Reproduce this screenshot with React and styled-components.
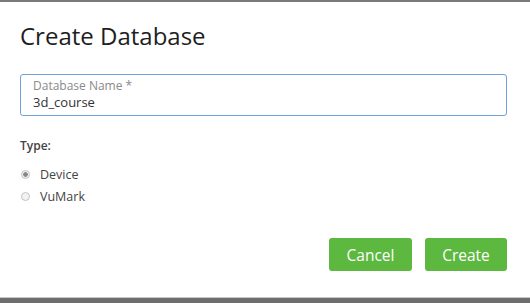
import React from "react";
import styled, { createGlobalStyle } from "styled-components";

const GlobalStyle = createGlobalStyle`
  html, body {
    margin: 0;
    padding: 0;
    background: #ffffff;
  }
  body {
    font-family: "Open Sans", "Noto Sans", sans-serif;
  }
`;

const Frame = styled.div`
  width: 530px;
  height: 303px;
  display: flex;
  flex-direction: column;
  box-sizing: border-box;
  border-top: 2px solid #7a7a7a;
  overflow: hidden;
`;

const Dialog = styled.div`
  flex: 1;
  display: flex;
  flex-direction: column;
  padding: 18px 23px 0 20px;
  background: #fff;
  border-bottom: 1px solid #c8c8c8;
`;

const Title = styled.h2`
  margin: 0;
  font-size: 24px;
  font-weight: 400;
  line-height: 32px;
  color: #1e1e1e;
`;

const Field = styled.div`
  margin-top: 22px;
  height: 42px;
  box-sizing: border-box;
  border: 1px solid #6fa2d8;
  border-radius: 3px;
  padding: 3px 12px 0;
  display: flex;
  flex-direction: column;
`;

const FieldLabel = styled.label`
  font-size: 12px;
  line-height: 15px;
  color: #8a8a8a;
`;

const FieldValue = styled.div`
  font-size: 13px;
  line-height: 18px;
  color: #333;
`;

const TypeLabel = styled.div`
  margin-top: 22px;
  font-size: 12px;
  font-weight: 600;
  color: #444;
  line-height: 16px;
`;

const RadioList = styled.div`
  margin-top: 12px;
  display: flex;
  flex-direction: column;
  gap: 6px;
`;

const RadioRow = styled.div`
  display: flex;
  align-items: center;
  gap: 10px;
  height: 16px;
  font-size: 12.5px;
  color: #444;
`;

const Dot = styled.span`
  width: 7px;
  height: 7px;
  margin-left: 1px;
  border-radius: 50%;
  border: 1px solid #c4c4c4;
  background: ${(p) => (p.checked ? "radial-gradient(circle, #888 0 2px, #eee 2.5px)" : "#f2f2f2")};
`;

const Actions = styled.div`
  margin-top: 34px;
  display: flex;
  justify-content: flex-end;
  gap: 13px;
`;

const GreenButton = styled.button`
  width: ${(p) => p.w}px;
  height: 33px;
  border: none;
  border-radius: 3px;
  background: #5cb83f;
  color: #fff;
  font-family: "Open Sans", sans-serif;
  font-size: 15.5px;
  cursor: pointer;
`;

const BottomBar = styled.div`
  height: 5px;
  background: #6e6e6e;
`;

export default function App() {
  return (
    <>
      <GlobalStyle />
      <Frame>
        <Dialog>
          <Title>Create Database</Title>
          <Field>
            <FieldLabel>Database Name *</FieldLabel>
            <FieldValue>3d_course</FieldValue>
          </Field>
          <TypeLabel>Type:</TypeLabel>
          <RadioList>
            <RadioRow>
              <Dot checked />
              Device
            </RadioRow>
            <RadioRow>
              <Dot />
              VuMark
            </RadioRow>
          </RadioList>
          <Actions>
            <GreenButton w={83}>Cancel</GreenButton>
            <GreenButton w={82}>Create</GreenButton>
          </Actions>
        </Dialog>
        <BottomBar />
      </Frame>
    </>
  );
}
